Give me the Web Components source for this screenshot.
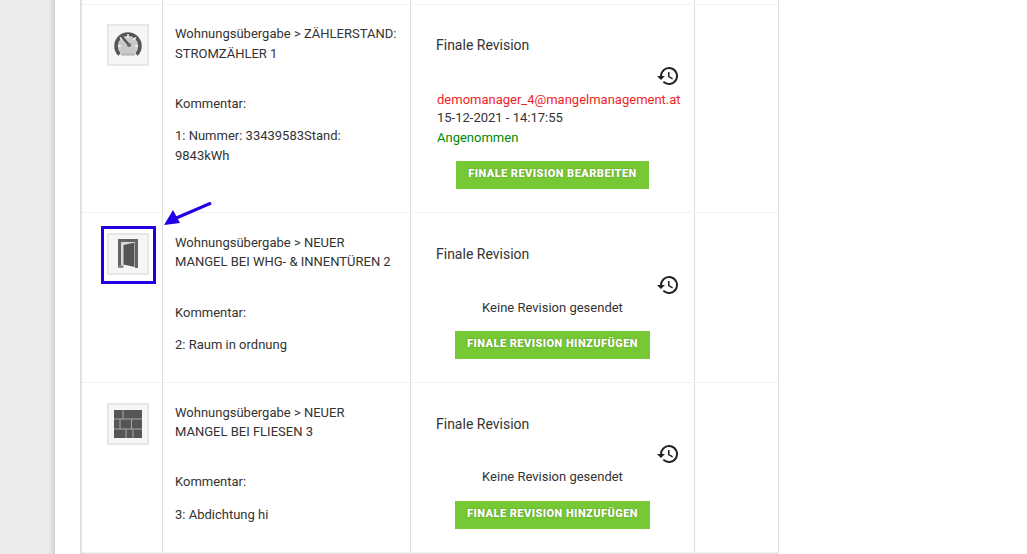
<!DOCTYPE html>
<html>
<head>
<meta charset="utf-8">
<style>
  html, body { margin: 0; padding: 0; height: 100%; overflow: hidden; background: #fff; }
  body { font-family: Roboto, "Liberation Sans", sans-serif; color: #333; }
</style>
</head>
<body>
<mangel-page>
  <mangel-row slot="row" class="stub" style="height:4px"></mangel-row>
  <mangel-row slot="row" icon="gauge" style="height:207px" title-text="Wohnungsübergabe &gt; ZÄHLERSTAND: STROMZÄHLER 1" comment="1: Nummer: 33439583Stand: 9843kWh">
    <revision-cell email="demomanager_4@mangelmanagement.at" date="15-12-2021 - 14:17:55" status="Angenommen" button="FINALE REVISION BEARBEITEN"></revision-cell>
  </mangel-row>
  <mangel-row slot="row" icon="door" marked style="height:169px;--nudge:1px;--line:19px;--comment-gap:32px" title-text="Wohnungsübergabe &gt; NEUER MANGEL BEI WHG- &amp; INNENTÜREN 2" comment="2: Raum in ordnung">
    <revision-cell button="FINALE REVISION HINZUFÜGEN"></revision-cell>
  </mangel-row>
  <mangel-row slot="row" icon="tiles" style="height:169px;--nudge:1px;--line:19px;--comment-gap:31px;--value-gap:13px;--icon-top:8px;--button-top:14px" title-text="Wohnungsübergabe &gt; NEUER MANGEL BEI FLIESEN 3" comment="3: Abdichtung hi">
    <revision-cell button="FINALE REVISION HINZUFÜGEN"></revision-cell>
  </mangel-row>
</mangel-page>

<script>
const ICONS = {
  gauge: `<svg viewBox="0 0 38 38" width="38" height="38">
    <circle cx="19" cy="18" r="11" fill="#c9c9c9"/>
    <path d="M10.500 28.500a12 12 0 1 1 17 0" fill="none" stroke="#555" stroke-width="3.500"/>
    <path d="M12 28.500h14" stroke="#b5b5b5" stroke-width="2"/>
    <path d="M19 8v4M11 11.500l2.500 2.500M27 11.500l-2.500 2.500M9 20h3M26 20h3" stroke="#f0f0f0" stroke-width="1.500"/>
    <path d="M13.500 11.500l6.500 7.500" stroke="#555" stroke-width="2.500"/>
    <circle cx="20" cy="19" r="2" fill="#666"/>
  </svg>`,
  door: `<svg viewBox="0 0 38 38" width="38" height="38">
    <path d="M9 4h20v29h-3V7H12v24.500H9z" fill="#636363"/>
    <path d="M12 7h14l-10 3v20l-4 1.500z" fill="#d8d8d8"/>
    <path d="M14.500 10l11-2.500V32l-11-2.500z" fill="#555"/>
    <path d="M9 30.500h5.500v2.500H9z" fill="#8a8a8a"/>
  </svg>`,
  tiles: `<svg viewBox="0 0 38 38" width="38" height="38">
    <path fill="#555" d="M5 5h28v28H5z"/>
    <path fill="none" stroke="#aaa" stroke-width="1" d="M5 14h28M5 24h28M14 5v9M11 14v10M22.500 14v10M17 24v9M24 24v9"/>
  </svg>`
};

class MangelPage extends HTMLElement {
  constructor() {
    super();
    this.attachShadow({ mode: "open" });
    this.shadowRoot.innerHTML = `
      <style>
        :host { display: flex; height: 554px; width: 1027px; overflow: hidden; background: #fff; }
        .Side { width: 55px; flex: none; background: #ececec; box-shadow: inset -6px 0 5px -4px #c8c8c8; }
        .Main { flex: none; padding-left: 25px; }
        .Table {
          width: 699px;
          border: solid #e0e0e0;
          border-width: 0 1px 2px 2px;
          box-sizing: border-box;
        }
      </style>
      <div class="Side"></div>
      <div class="Main"><div class="Table"><slot name="row"></slot></div></div>
    `;
  }
}

class MangelRow extends HTMLElement {
  constructor() {
    super();
    this.attachShadow({ mode: "open" });
  }
  connectedCallback() {
    const icon = this.getAttribute("icon");
    const marked = this.hasAttribute("marked");
    this.shadowRoot.innerHTML = `
      <style>
        :host {
          display: grid;
          grid-template-columns: 81px 248px 284px 1fr;
          border-bottom: 1px solid #f2f2f2;
          font: 13px/20px Roboto, "Liberation Sans", sans-serif;
          color: #333;
        }
        .Cell { border-right: 1px solid #dcdcdc; min-width: 0; position: relative; }
        .Cell:last-child { border-right: 0; }
        .IconCell { padding: calc(19px + var(--nudge, 0px)) 0 0 25px; }
        .Thumb {
          width: 42px; height: 42px; box-sizing: border-box;
          background: #f6f6f6; border: 2px solid #e6e6e6;
          display: grid; place-items: center;
        }
        .Thumb svg { filter: blur(0.4px); }
        .Mark { position: absolute; left: 19px; top: 13px; width: 55px; height: 58px; box-sizing: border-box; border: 3px solid #2200e6; }
        .Arrow { position: absolute; left: 79px; top: -11px; }
        .Text { padding: calc(19px + var(--nudge, 0px)) 12px 0 12px; }
        .Text p { margin: 0; }
        .Title { line-height: var(--line, 20px); }
        .Text .Comment { margin-top: var(--comment-gap, 30px); }
        .Text .Value { margin-top: var(--value-gap, 12px); }
      </style>
      ${icon ? `
      <div class="Cell IconCell">
        <div class="Thumb">${ICONS[icon]}</div>
        ${marked ? `<div class="Mark"></div>
        <svg class="Arrow" width="52" height="28" viewBox="0 0 52 28"><path d="M50 1L13 17" stroke="#2200e6" stroke-width="3" fill="none"/><path d="M3 23l9-15 7 13z" fill="#2200e6"/></svg>` : ""}
      </div>
      <div class="Cell Text">
        <p class="Title">${this.getAttribute("title-text")}</p>
        <p class="Comment">Kommentar:</p>
        <p class="Value">${this.getAttribute("comment")}</p>
      </div>
      <div class="Cell"><slot></slot></div>
      <div class="Cell"></div>` : `
      <div class="Cell"></div><div class="Cell"></div><div class="Cell"></div><div class="Cell"></div>`}
    `;
  }
}

class RevisionCell extends HTMLElement {
  constructor() {
    super();
    this.attachShadow({ mode: "open" });
  }
  connectedCallback() {
    const email = this.getAttribute("email");
    this.shadowRoot.innerHTML = `
      <style>
        :host { display: block; padding: calc(30px + var(--nudge, 0px)) 26px 0 26px; font: 13px/20px Roboto, "Liberation Sans", sans-serif; color: #333; }
        .Heading { font-size: 14px; line-height: 20px; margin-left: -1px; }
        .IconLine { display: flex; justify-content: flex-end; margin: var(--icon-top, 9px) -12px 0 0; height: 27px; }
        .Meta { white-space: nowrap; }
        .Email { color: #f01f1f; line-height: 17px; }
        .Status { color: #008a00; }
        .None { text-align: center; margin-top: -2px; }
        .Button {
          display: block; width: fit-content; margin: var(--button-top, 13px) auto 0;
          padding: 0 12.5px; height: 28px; line-height: 25px;
          background: #76c934; color: #fff;
          font-size: 11px; font-weight: 900; letter-spacing: 0.45px;
          text-shadow: 0 0 2px rgba(0,0,0,.3);
        }
      </style>
      <div class="Heading">Finale Revision</div>
      <div class="IconLine">
        <svg width="24" height="24" viewBox="0 0 24 24"><path fill="#222" d="M13 3a9 9 0 0 0-9 9H1l3.890 3.890.070.140L9 12H6a7 7 0 1 1 2.050 4.950l-1.420 1.420A9 9 0 1 0 13 3zm-1 5v5l4.280 2.540.720-1.210-3.500-2.080V8z"/></svg>
      </div>
      ${email ? `
      <div class="Meta">
        <div class="Email">${email}</div>
        <div>${this.getAttribute("date")}</div>
        <div class="Status">${this.getAttribute("status")}</div>
      </div>` : `<div class="None">Keine Revision gesendet</div>`}
      <span class="Button">${this.getAttribute("button")}</span>
    `;
  }
}

customElements.define("mangel-page", MangelPage);
customElements.define("mangel-row", MangelRow);
customElements.define("revision-cell", RevisionCell);
</script>
</body>
</html>
